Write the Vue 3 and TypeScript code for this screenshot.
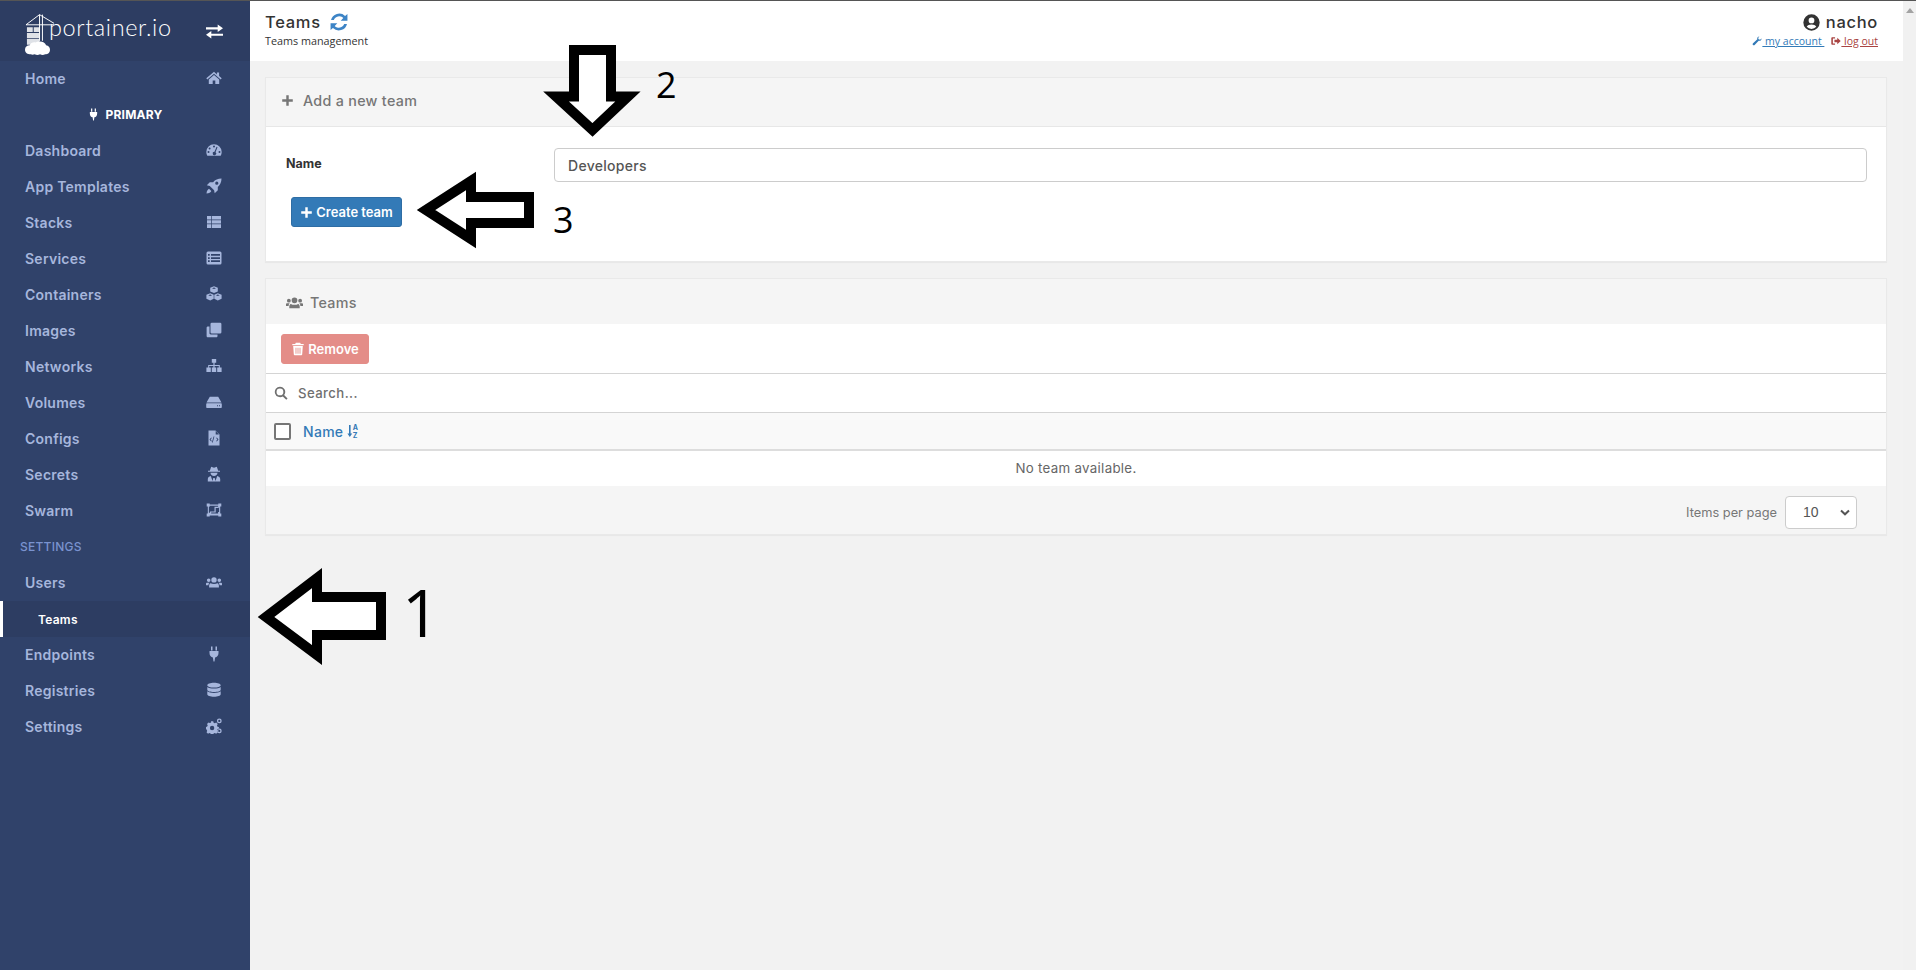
<script setup lang="ts">
interface NavItem {
  label: string;
  icon?: string;
  kind?: 'item' | 'endpoint' | 'section' | 'sub';
}

const icons: Record<string, string> = {
  home: 'M8 1.800.3 8.300l1 1.200L8 3.800l6.700 5.700 1-1.200-2.600-2.200V2.500h-2.200v1.900ZM8 5 2.800 9.400V14h3.900v-3.500h2.600V14h3.900V9.400Z',
  plug: 'M5 .5h1.500v4H5Zm4.500 0H11v4H9.500ZM3.500 5h9v2c0 2.500-1.500 4-3.400 4.500l-.6 4h-1l-.6-4C5 11 3.500 9.500 3.500 7Z',
  dashboard: 'M8 2.200A7.700 7.700 0 0 0 .3 9.900c0 1.400.4 2.700 1 3.800h13.400c.6-1.100 1-2.400 1-3.800A7.700 7.700 0 0 0 8 2.200ZM8 3.600a1 1 0 1 1 0 2 1 1 0 0 1 0-2ZM3.600 5.400a1 1 0 1 1 0 2 1 1 0 0 1 0-2ZM2.500 9.100a1 1 0 1 1 0 2 1 1 0 0 1 0-2Zm11 0a1 1 0 1 1 0 2 1 1 0 0 1 0-2ZM10.600 4.800l.9.400-2 5a1.700 1.700 0 1 1-1-.4Z',
  rocket: 'M15.500.5c-3.600 0-6.300 1.300-8.400 3.700H3.800L.8 7.300l3 .6 4.300 4.300.6 3 3.100-3V8.900c2.400-2.100 3.700-4.800 3.700-8.400ZM10.800 3.600a1.600 1.600 0 1 1 0 3.200 1.600 1.600 0 0 1 0-3.200ZM3 10.700c-1.300.6-2.300 2.200-2.500 4.800 2.600-.2 4.200-1.200 4.800-2.500Z',
  table: 'M1 2h14v12H1ZM1 5.500h4.300V2H6v3.500h9v.7H6V9.500h9v.7H6V14h-.7v-3.800H1v-.7h4.300V6.200H1Z',
  list: 'M2 1.500h12A1.500 1.500 0 0 1 15.500 3v10a1.500 1.500 0 0 1-1.500 1.500H2A1.500 1.500 0 0 1 .5 13V3A1.500 1.500 0 0 1 2 1.500ZM2 4v1.700h1.700V4Zm3 0v1.700h9V4ZM2 7.200v1.700h1.700V7.200Zm3 0v1.700h9V7.200Zm-3 3.100V12h1.700v-1.700Zm3 0V12h9v-1.700Z',
  cubes: 'M8 .3l3.800 1.500v3.800L8 7.100 4.200 5.600V1.800ZM8 1.500 6 2.300 8 3.100l2-.8ZM4.200 7.300l3.500 1.400v4.100l-3.500 1.800L.4 12.800V8.700Zm0 1.200-1.900.8 1.900.8 1.900-.8ZM11.800 7.300l3.800 1.400v4.100l-3.800 1.800-3.500-1.800V8.700Zm0 1.200-1.900.8 1.900.8 1.900-.8Z',
  clone: 'M5.800.7h8.300a1.300 1.300 0 0 1 1.300 1.300v8.300a1.300 1.300 0 0 1-1.300 1.300H5.800a1.300 1.300 0 0 1-1.300-1.300V2A1.300 1.300 0 0 1 5.800.7ZM3.500 4.500v6.800c0 .7.500 1.200 1.200 1.200h6.800v1.500c0 .7-.5 1.300-1.300 1.300H1.900c-.7 0-1.300-.6-1.300-1.300V5.800c0-.7.600-1.300 1.300-1.300Z',
  sitemap: 'M5.800 1h4.400v3.800H8.600V7h5.200v2.600h1.800v4.400h-4.400V9.600h1.600V8H8.600v1.600h1.600V14H5.800V9.600h1.600V8H3.200v1.600h1.600V14H.4V9.600h1.800V7h5.200V4.800H5.800Z',
  hdd: 'M3.800 2.800h8.400l3.300 5.700H.5ZM1.200 9.300h13.600c.6 0 1 .4 1 1v2.600c0 .6-.4 1-1 1H1.200c-.6 0-1-.4-1-1v-2.600c0-.6.4-1 1-1Zm9.800 1.900v1h1v-1Zm2 0v1h1v-1Z',
  file: 'M2.500.5h7l4 4v11h-11ZM9.700 1v3.500h3.300ZM7.600 6.500l-1.700 6h.8l1.700-6ZM5.200 7.600 3.500 9.500l1.700 1.900.6-.5-1.200-1.400 1.200-1.400Zm5.600 0-.6.5 1.200 1.400-1.200 1.400.6.5 1.700-1.900Z',
  secret: 'M5.200.8 8 1.700 10.800.8l1.400 4H14v1H2v-1h1.800ZM4.500 6.800h7c0 1.900-1.600 3.200-3.500 3.200S4.500 8.700 4.500 6.800ZM1.800 15.500v-2.400c0-1.500 1.300-2.700 3-3L6.500 15 7.300 12h1.400l.8 3 1.700-4.900c1.700.3 3 1.500 3 3v2.400Z',
  swarm: 'M.7 1.500h3v1.100h8.600V1.500h3v3h-1.100v7h1.100v3h-3v-1.100H3.700v1.100h-3v-3h1.100v-7H.700ZM3.700 3.700v1.100H2.900v5.900h1.100V9.500h4.500V4.800h3.600V3.700ZM9.700 6v4.600H5.200v1h6.900V9.900h1V5H12.800V6Z',
  users: 'M8 3.200a2.700 2.700 0 1 1 0 5.400 2.700 2.700 0 0 1 0-5.400ZM2.700 4.500a1.800 1.800 0 1 1 0 3.600 1.800 1.800 0 0 1 0-3.600Zm10.600 0a1.800 1.800 0 1 1 0 3.600 1.800 1.800 0 0 1 0-3.600ZM4.600 9.300c.9.500 2 .8 3.400.8s2.500-.3 3.400-.8c1 .3 1.500 1.300 1.500 2.500v1.700H3.100v-1.700c0-1.200.5-2.200 1.500-2.500ZM0 9.600c0-.6.500-.9 1-.9h2.500c-.6.500-1 1.400-1 2.500H0Zm16 0c0-.6-.5-.9-1-.9h-2.500c.6.500 1 1.400 1 2.500H16Z',
  database: 'M8 .8c3.700 0 6.700 1 6.700 2.400S11.700 5.600 8 5.600 1.300 4.600 1.300 3.200 4.300.8 8 .8ZM1.300 5c1.300 1 3.800 1.600 6.700 1.600S13.400 6 14.700 5v2.700c0 1.300-3 2.300-6.700 2.300s-6.700-1-6.700-2.300Zm0 4.300c1.300 1 3.800 1.600 6.700 1.600s5.400-.6 6.700-1.600v2.900c0 1.500-3 2.500-6.700 2.500s-6.700-1-6.700-2.500Z',
  cogs: 'M5 3.300h2.200l.4 1.500 1.200.5 1.400-.7 1.500 1.500-.7 1.400.5 1.200 1.400.4v2.200l-1.400.4-.5 1.200.7 1.400-1.500 1.500-1.400-.7-1.200.5-.4 1H5l-.4-1-1.200-.5-1.400.7-1.500-1.500.7-1.400-.5-1.200L0 11.100V8.900l1.200-.4.5-1.200L1 5.900 2.500 4.400l1.400.7 1.200-.5ZM6.100 7.800a2.200 2.200 0 1 0 0 4.400 2.200 2.200 0 0 0 0-4.400ZM13.300.5a2.400 2.400 0 1 1 0 4.800 2.400 2.400 0 0 1 0-4.800Zm0 1.300a1.100 1.100 0 1 0 0 2.200 1.100 1.100 0 0 0 0-2.200ZM13.300 10.500a2.400 2.400 0 1 1 0 4.800 2.400 2.400 0 0 1 0-4.800Zm0 1.300a1.100 1.100 0 1 0 0 2.200 1.100 1.100 0 0 0 0-2.200Z',
  exchange: 'M0 4h11V1.500l5 3.500-5 3.500V6H0ZM16 10H5V7.500L0 11l5 3.500V12h11Z',
  refresh: 'M13.400 2.600 15.500 .8v6h-6l2.300-2.300A5 5 0 0 0 3.400 6.300H.9a7.500 7.500 0 0 1 12.500-3.700ZM2.600 13.400.5 15.200v-6h6l-2.300 2.300a5 5 0 0 0 8.400-1.800h2.500a7.500 7.500 0 0 1-12.500 3.700Z',
  plus: 'M6.500 1.500h3v5h5v3h-5v5h-3v-5h-5v-3h5Z',
  userCircle: 'M8 .3a7.700 7.700 0 1 1 0 15.400A7.700 7.700 0 0 1 8 .3Zm0 3a2.700 2.700 0 1 0 0 5.400 2.700 2.700 0 0 0 0-5.400Zm0 6.500c-2 0-3.800.8-4.500 2.200a6 6 0 0 0 9 0C11.800 10.600 10 9.800 8 9.800Z',
  wrench: 'M15.300 4.200c0 2.400-2.300 4-4.600 3.200L3.800 14.600a1.800 1.800 0 0 1-2.500-2.500l7.200-6.900C7.700 2.900 9.500.7 11.800.7l-2 2.300.8 2.300 2.300.7 2.200-2Z',
  signOut: 'M1.800 2h4.700v2H3v8h3.500v2H1.800C1 14 .500 13.400.500 12.700V3.300C.500 2.600 1 2 1.800 2ZM10 2.800 15.500 8 10 13.200V10H5.500V6H10Z',
  trash: 'M5.500.8h5l.7 1.400h3.300v1.600h-13V2.200h3.300ZM2.500 4.700h11l-.7 9.300c0 .7-.6 1.200-1.300 1.200h-7c-.7 0-1.300-.5-1.300-1.200ZM5.200 6.500v6.800h1V6.500Zm2.300 0v6.800h1V6.500Zm2.300 0v6.800h1V6.500Z',
  search: 'M6.800.8a6 6 0 0 1 4.800 9.600l3.900 3.900-1.500 1.500-3.900-3.900A6 6 0 1 1 6.800.8Zm0 2.100a3.900 3.900 0 1 0 0 7.800 3.900 3.900 0 0 0 0-7.800Z',
};

const nav: NavItem[] = [
  { label: 'Home', icon: 'home' },
  { label: 'PRIMARY', kind: 'endpoint' },
  { label: 'Dashboard', icon: 'dashboard' },
  { label: 'App Templates', icon: 'rocket' },
  { label: 'Stacks', icon: 'table' },
  { label: 'Services', icon: 'list' },
  { label: 'Containers', icon: 'cubes' },
  { label: 'Images', icon: 'clone' },
  { label: 'Networks', icon: 'sitemap' },
  { label: 'Volumes', icon: 'hdd' },
  { label: 'Configs', icon: 'file' },
  { label: 'Secrets', icon: 'secret' },
  { label: 'Swarm', icon: 'swarm' },
  { label: 'SETTINGS', kind: 'section' },
  { label: 'Users', icon: 'users' },
  { label: 'Teams', kind: 'sub' },
  { label: 'Endpoints', icon: 'plug' },
  { label: 'Registries', icon: 'database' },
  { label: 'Settings', icon: 'cogs' },
];
</script>

<template>
  <div class="page">
    <aside class="sidebar">
      <div class="brand">
        <div class="logo">
          <svg class="mark" viewBox="0 0 32 42" aria-hidden="true">
            <g fill="none" stroke="#fff" stroke-width="1">
              <path d="M1 11.500 15 1l15 9M1 11.500h29M15 1v27M18 1v27" />
            </g>
            <path d="M2 14h6v5H2ZM9 14h6v5H9ZM2 20h13v5H2ZM2 26h13v6H2Z" fill="#fff" opacity=".85" />
            <path d="M6 42c-3.500 0-6-1.800-6-4.800 0-2.600 2-4.500 4.800-4.500 1-2.400 3.500-3.700 6.200-3 1-.8 2.300-1 3.800-.9 3-.3 6.200 1 7 3.900 2.400.3 4 2 4 4.500 0 3-2.200 4.800-5 4.800-1.700.8-3.500.8-5.300 0-1.800.8-3.700.8-5.500 0-1.500.5-3 .5-4 0Z" fill="#fff" />
          </svg>
          <span class="logo-text">portainer.io</span>
        </div>
        <svg class="ic toggle" viewBox="0 0 16 16" aria-hidden="true"><path :d="icons.exchange" /></svg>
      </div>
      <nav>
        <div v-for="item in nav" :key="item.label" class="nav-row" :class="item.kind">
          <template v-if="item.kind === 'endpoint'">
            <svg class="ic" viewBox="0 0 16 16" aria-hidden="true"><path :d="icons.plug" /></svg>
            <span>{{ item.label }}</span>
          </template>
          <template v-else>
            <span>{{ item.label }}</span>
            <svg v-if="item.icon" class="ic" viewBox="0 0 16 16" aria-hidden="true"><path :d="icons[item.icon]" /></svg>
          </template>
        </div>
      </nav>
    </aside>

    <div class="content">
      <header class="topbar">
        <div>
          <div class="title">
            Teams
            <svg class="ic refresh" viewBox="0 0 16 16" aria-hidden="true"><path :d="icons.refresh" /></svg>
          </div>
          <div class="subtitle">Teams management</div>
        </div>
        <div class="account">
          <div class="who">
            <svg class="ic" viewBox="0 0 16 16" aria-hidden="true"><path :d="icons.userCircle" /></svg>
            nacho
          </div>
          <div class="links">
            <a class="blue"><svg class="ic" viewBox="0 0 16 16" aria-hidden="true"><path :d="icons.wrench" /></svg><u> my account </u></a>
            <a class="red"><svg class="ic" viewBox="0 0 16 16" aria-hidden="true"><path :d="icons.signOut" /></svg><u> log out</u></a>
          </div>
        </div>
      </header>

      <main class="main">
        <section class="card">
          <div class="card-head add">
            <svg class="ic" viewBox="0 0 16 16" aria-hidden="true"><path :d="icons.plus" /></svg>
            Add a new team
          </div>
          <div class="form">
            <div class="form-row">
              <label>Name</label>
              <input type="text" value="Developers" />
            </div>
            <button type="button" class="btn primary">
              <svg class="ic" viewBox="0 0 16 16" aria-hidden="true"><path :d="icons.plus" /></svg>
              Create team
            </button>
          </div>
        </section>

        <section class="card">
          <div class="card-head list-head">
            <svg class="ic" viewBox="0 0 16 16" aria-hidden="true"><path :d="icons.users" /></svg>
            Teams
          </div>
          <div class="actions">
            <button type="button" class="btn danger">
              <svg class="ic" viewBox="0 0 16 16" aria-hidden="true"><path :d="icons.trash" /></svg>
              Remove
            </button>
          </div>
          <div class="search">
            <svg class="ic" viewBox="0 0 16 16" aria-hidden="true"><path :d="icons.search" /></svg>
            <span>Search...</span>
          </div>
          <div class="thead">
            <span class="check"></span>
            <span class="sort">
              Name
              <svg class="sort-ic" viewBox="0 0 12 14" aria-hidden="true">
                <path d="M2 1h1.600v8.500H5.200L2.800 13 .4 9.500H2Z" fill="currentColor" />
                <text x="5.800" y="6" font-size="7" font-weight="700" fill="currentColor">A</text>
                <text x="5.800" y="13.500" font-size="7" font-weight="700" fill="currentColor">Z</text>
              </svg>
            </span>
          </div>
          <div class="empty">No team available.</div>
          <div class="pager">
            <span>Items per page</span>
            <div class="select">
              <span>10</span>
              <svg viewBox="0 0 10 7" aria-hidden="true"><path d="M1 1.500 5 5.300 9 1.500" fill="none" stroke="#555" stroke-width="2" /></svg>
            </div>
          </div>
        </section>
      </main>
    </div>

    <div class="scrollbar"><i></i></div>

    <!-- annotations drawn over the screenshot -->
    <svg class="marks" viewBox="0 0 1916 970" aria-hidden="true">
      <g fill="#fff" stroke="#000" stroke-width="10" stroke-miterlimit="10">
        <path d="M266 617 317 578V597H381V635H317V655Z" />
        <path d="M574 50H611V96.500H628L592.500 130 556 96.500H574Z" />
        <path d="M426 210 471 181V197H529V223H471V239Z" />
      </g>
      <g class="num">
        <text x="402" y="637" font-size="66">1</text>
        <text x="656" y="98" font-size="36">2</text>
        <text x="553" y="233" font-size="36">3</text>
      </g>
    </svg>
  </div>
</template>

<style scoped>
.page {
  position: relative;
  display: flex;
  height: 969px;
  border-top: 1px solid #555;
  overflow: hidden;
  background: #f2f2f2;
  font-family: Inter, 'Liberation Sans', sans-serif;
  color: #333;
}

.ic {
  width: 1em;
  height: 1em;
  fill: currentColor;
  fill-rule: evenodd;
  flex: none;
}

.sidebar {
  width: 250px;
  flex: none;
  background: #30426a;
  color: #a6b6dc;
}

.brand {
  display: flex;
  align-items: center;
  justify-content: space-between;
  height: 60px;
  padding: 0 27px 0 25px;
  background: #2d3d62;
  color: #fff;
}

.logo {
  display: flex;
  align-items: flex-start;
  height: 50px;
}

.mark {
  width: 31px;
  height: 42px;
  margin-top: 7px;
}

.logo-text {
  margin: 6px 0 0 -7px;
  font-family: Lato, sans-serif;
  font-size: 23.5px;
  font-weight: 300;
  letter-spacing: 0.6px;
  line-height: 30px;
}

.toggle {
  font-size: 17px;
}

.nav-row {
  display: flex;
  align-items: center;
  justify-content: space-between;
  height: 36px;
  box-sizing: border-box;
  padding: 0 28px 2px 25px;
  font-size: 14px;
  font-weight: 600;
  letter-spacing: 0.25px;
}

.nav-row .ic {
  font-size: 16px;
}

.nav-row.endpoint {
  justify-content: center;
  gap: 5px;
  padding: 0 0 2px;
  color: #fff;
  font-size: 12px;
  font-weight: 700;
}

.nav-row.endpoint .ic {
  font-size: 13px;
}

.nav-row.section {
  padding-left: 20px;
  color: #7a93cf;
  font-size: 12px;
  font-weight: 500;
}

.nav-row.sub {
  padding: 0 0 0 35px;
  background: #2d3d62;
  border-left: 3px solid #fff;
  color: #fff;
  font-size: 12px;
}

.content {
  flex: 1;
  min-width: 0;
}

.topbar {
  display: flex;
  justify-content: space-between;
  height: 60px;
  box-sizing: border-box;
  padding: 12px 25px 0 15px;
  background: #fff;
}

.title {
  display: flex;
  align-items: center;
  gap: 9px;
  height: 18px;
  font-size: 16.5px;
  font-weight: 500;
  letter-spacing: 0.7px;
}

.refresh {
  font-size: 18px;
  color: #3d84c6;
}

.subtitle {
  margin-top: 3px;
  font-family: 'Open Sans', sans-serif;
  font-size: 10.8px;
  line-height: 14px;
}

.account {
  text-align: right;
}

.who {
  display: flex;
  justify-content: flex-end;
  align-items: center;
  gap: 6px;
  height: 18px;
  font-size: 16.5px;
  font-weight: 500;
  letter-spacing: 0.7px;
}

.who .ic {
  font-size: 17px;
}

.links {
  display: flex;
  justify-content: flex-end;
  gap: 7px;
  margin-top: 3px;
  font-family: 'Open Sans', sans-serif;
  font-size: 10.5px;
  line-height: 14px;
}

.links a {
  display: flex;
  align-items: center;
  white-space: pre;
}

.links .ic {
  font-size: 10px;
}

.blue {
  color: #337ab7;
}

.red {
  color: #a94442;
}

.main {
  display: flex;
  flex-direction: column;
  gap: 16px;
  padding: 16px 16px 0 15px;
}

.card {
  background: #fff;
  border: 1px solid #e9e9e9;
  box-shadow: 0 1px 1px rgba(0, 0, 0, 0.04);
}

.card-head {
  display: flex;
  align-items: center;
  background: #f5f5f5;
  color: #767676;
  font-size: 14.3px;
  font-weight: 500;
  letter-spacing: 0.3px;
}

.add {
  height: 49px;
  box-sizing: border-box;
  gap: 9px;
  padding: 0 0 3px 15px;
  border-bottom: 1px solid #e7e7e7;
}

.add .ic {
  font-size: 13px;
}

.list-head {
  height: 45px;
  box-sizing: border-box;
  gap: 7px;
  padding: 2px 0 0 20px;
}

.list-head .ic {
  font-size: 17px;
}

.form {
  height: 134px;
  box-sizing: border-box;
  padding: 21px 19px 0 20px;
}

.form-row {
  display: flex;
  align-items: center;
  height: 34px;
}

.form-row label {
  width: 268px;
  flex: none;
  margin-top: -3px;
  font-size: 12.5px;
  font-weight: 700;
}

.form-row input {
  flex: 1;
  min-width: 0;
  height: 34px;
  box-sizing: border-box;
  padding: 0 13px;
  border: 1px solid #ccc;
  border-radius: 4px;
  background: #fff;
  color: #555;
  font: 500 14px Inter, sans-serif;
  letter-spacing: 0.3px;
}

.btn {
  display: flex;
  align-items: center;
  justify-content: center;
  gap: 3px;
  height: 30px;
  padding: 0;
  border-radius: 3px;
  border: 1px solid transparent;
  color: #fff;
  font: 600 13px Inter, sans-serif;
}

.btn.primary {
  width: 111px;
  margin: 15px 0 0 5px;
  background: #337ab7;
  border-color: #2e6da4;
}

.btn.primary .ic {
  font-size: 13px;
}

.btn.danger {
  width: 88px;
  background: #e48d88;
  border-color: #e48d88;
}

.btn.danger .ic {
  font-size: 14px;
}

.actions {
  height: 50px;
  box-sizing: border-box;
  padding: 10px 15px;
  border-bottom: 1px solid #d4d4d4;
}

.search {
  display: flex;
  align-items: center;
  gap: 10px;
  height: 38px;
  padding-left: 8px;
  border-bottom: 1px solid #d4d4d4;
  color: #6f6f6f;
  font-size: 13.2px;
  font-weight: 500;
  letter-spacing: 0.4px;
}

.search .ic {
  font-size: 14px;
}

.thead {
  display: flex;
  align-items: center;
  gap: 12px;
  height: 36px;
  padding-left: 8px;
  background: #f9f9f9;
  border-bottom: 2px solid #ddd;
}

.check {
  width: 13px;
  height: 13px;
  border: 2px solid #767676;
  border-radius: 2px;
  background: #fff;
}

.sort {
  display: flex;
  align-items: center;
  gap: 4px;
  color: #337ab7;
  font-size: 14px;
  font-weight: 500;
  letter-spacing: 0.3px;
}

.sort-ic {
  width: 12px;
  height: 14px;
  font-family: Inter, sans-serif;
}

.empty {
  height: 35px;
  line-height: 35px;
  text-align: center;
  color: #666;
  font-size: 13.3px;
  letter-spacing: 0.3px;
}

.pager {
  display: flex;
  justify-content: flex-end;
  align-items: center;
  gap: 8px;
  height: 48px;
  box-sizing: border-box;
  padding: 4px 29px 0 0;
  background: #f5f5f5;
  color: #777;
  font-size: 12.8px;
}

.select {
  display: flex;
  align-items: center;
  justify-content: space-between;
  width: 72px;
  height: 33px;
  box-sizing: border-box;
  padding: 0 6px 0 17px;
  border: 1px solid #ccc;
  border-radius: 4px;
  background: #fff;
  color: #555;
  font: 14px 'Liberation Sans', sans-serif;
}

.select svg {
  width: 10px;
  height: 7px;
}

.scrollbar {
  width: 13px;
  flex: none;
  background: #f1f1f1;
}

.scrollbar i {
  display: block;
  width: 0;
  margin: 7px auto 0;
  border: 4px solid transparent;
  border-top: 0;
  border-bottom: 5px solid #a3a3a3;
}

.marks {
  position: absolute;
  top: -1px;
  left: 0;
  width: 1916px;
  height: 970px;
  pointer-events: none;
}

.num {
  font-family: 'Open Sans', sans-serif;
  font-weight: 400;
  fill: #000;
}
</style>

<style>
html,
body {
  margin: 0;
  overflow: hidden;
}
</style>
